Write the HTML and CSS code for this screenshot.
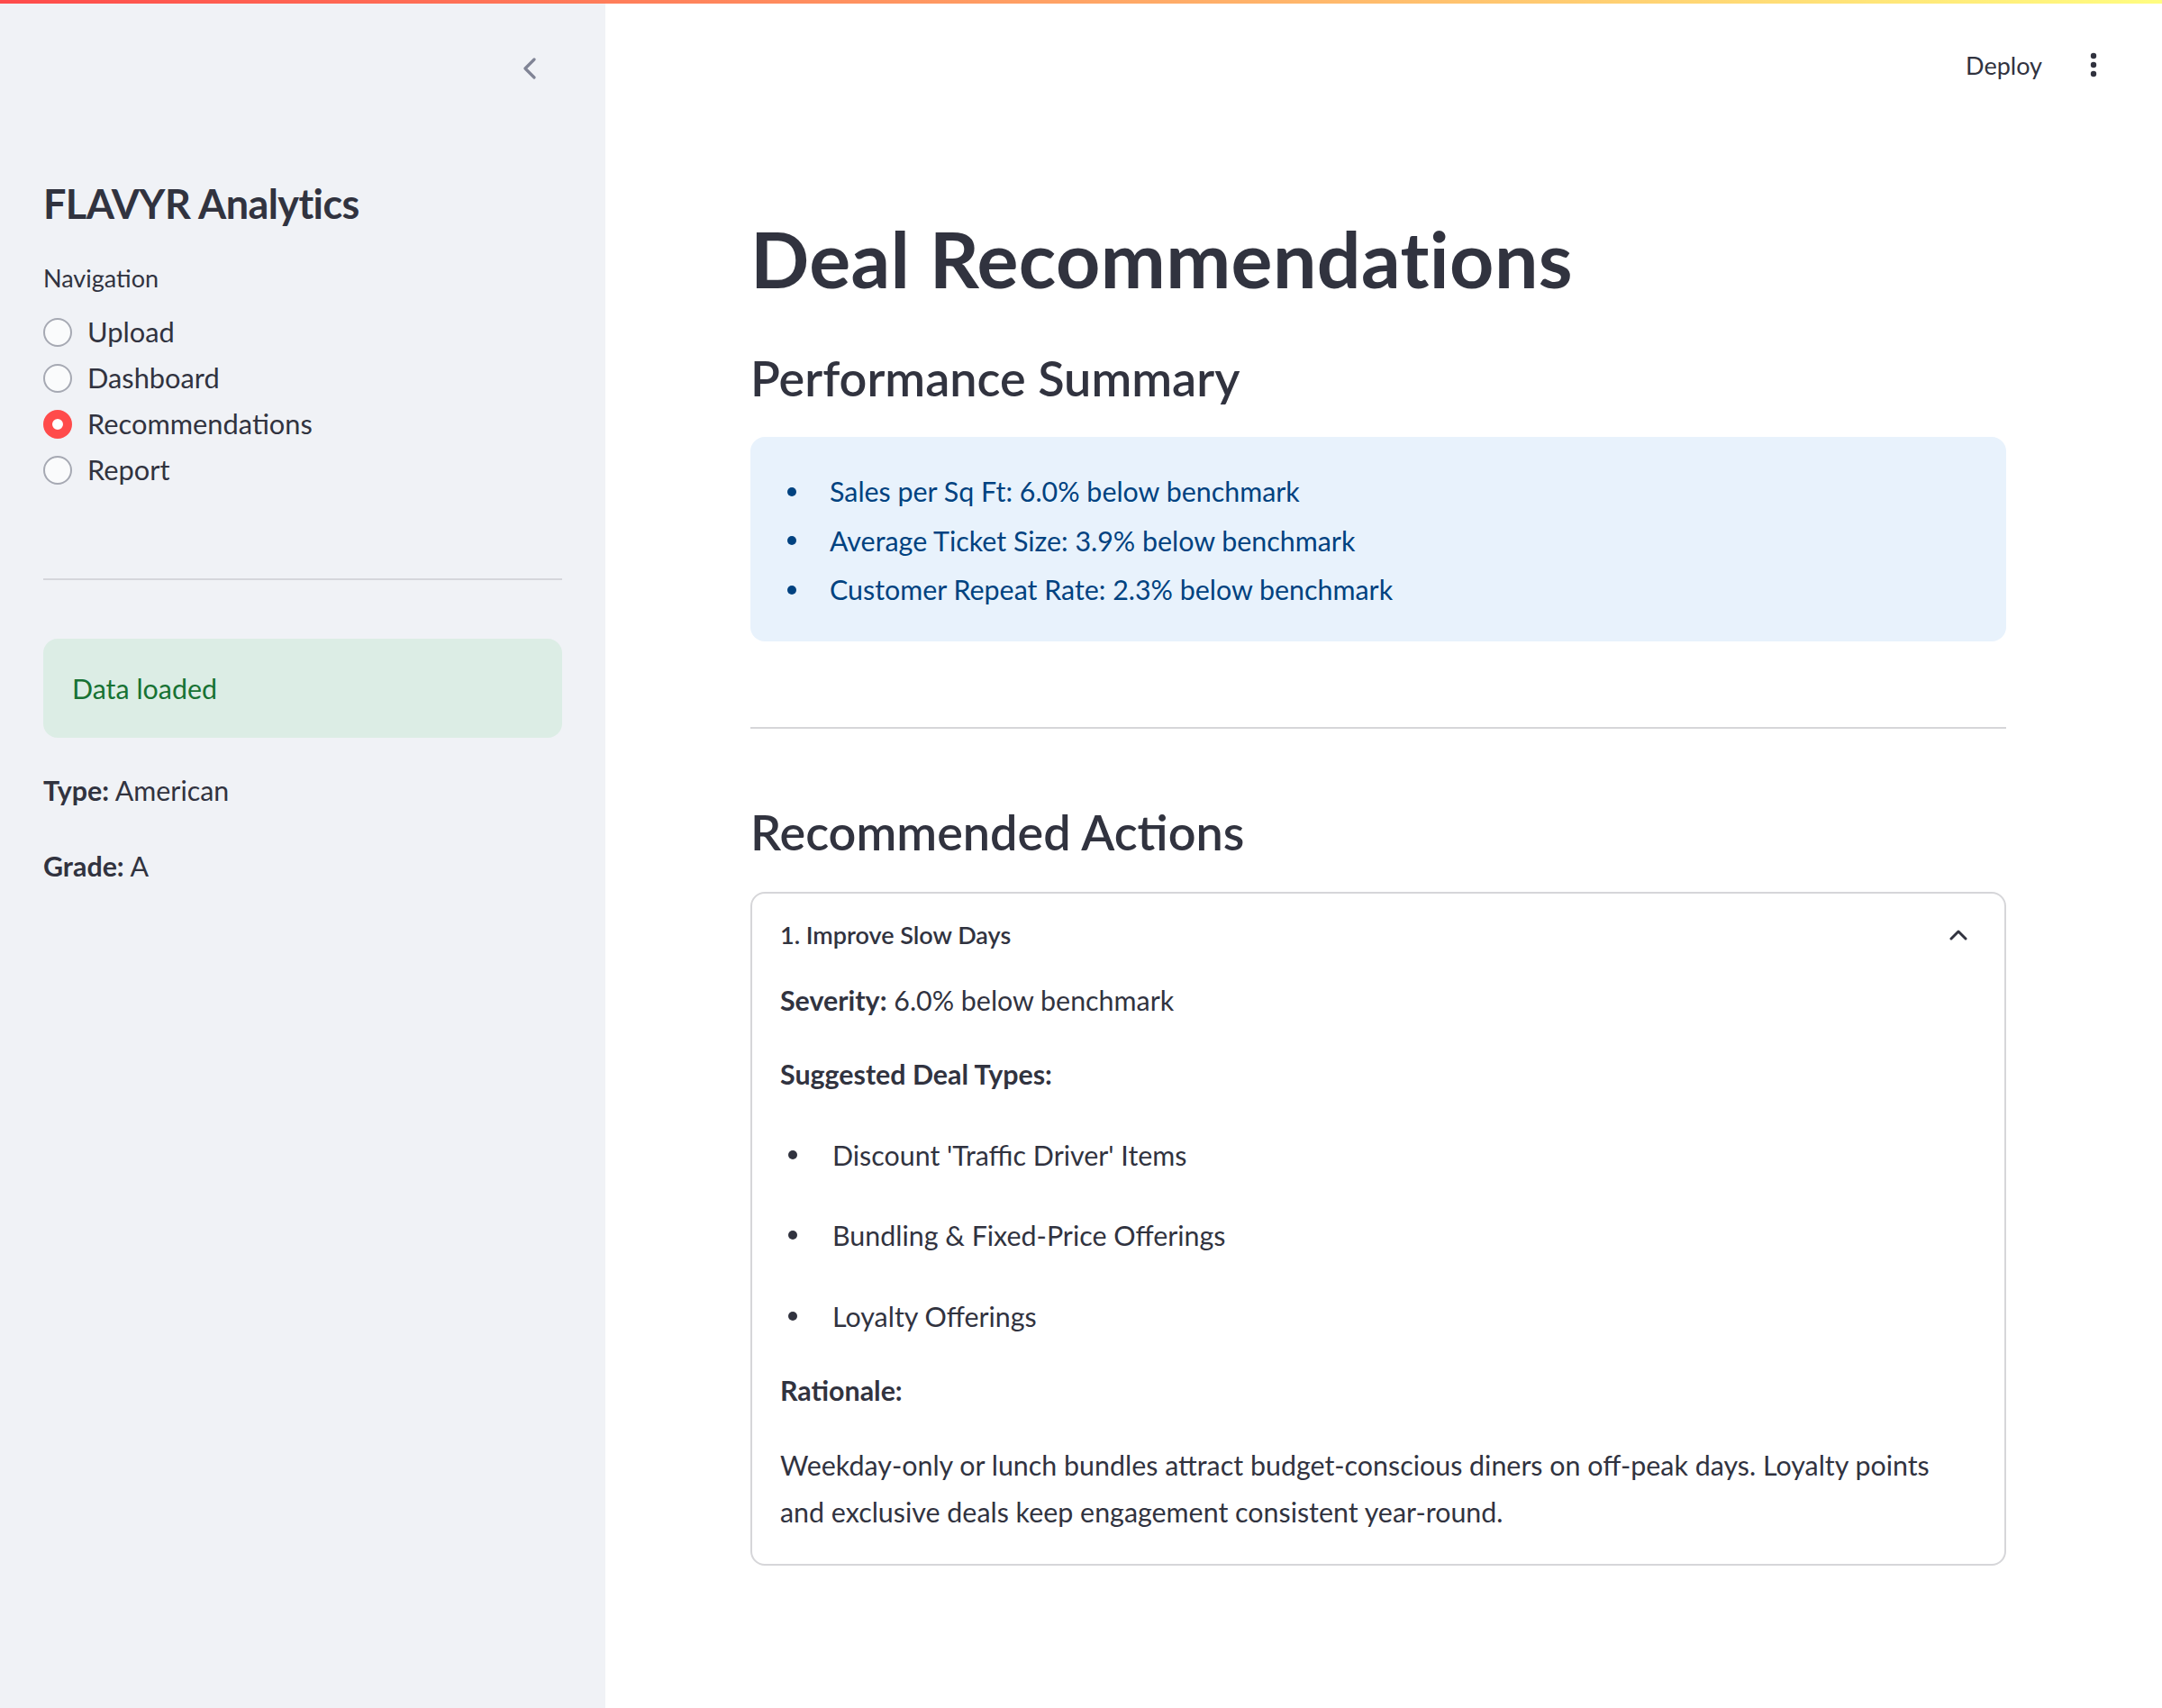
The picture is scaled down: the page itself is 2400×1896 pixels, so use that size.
FILE: index.html
```html
<!DOCTYPE html>
<html lang="en">
<head>
<meta charset="utf-8">
<title>FLAVYR Analytics</title>
<link rel="stylesheet" href="styles.css">
</head>
<body>
<div class="decor"></div>
<div class="app">
  <aside class="sidebar">
    <div class="sb-top">
      <svg class="collapse" width="16" height="24" viewBox="0 0 16 24"><path d="M13 2 L3 12 L13 22" fill="none" stroke="#808495" stroke-width="3.2" stroke-linecap="round" stroke-linejoin="round"/></svg>
    </div>
    <div class="sb-content">
      <h1 class="sb-title">FLAVYR Analytics</h1>
      <div class="nav-label">Navigation</div>
      <div class="radios">
        <div class="radio"><span class="circle"></span><span>Upload</span></div>
        <div class="radio"><span class="circle"></span><span>Dashboard</span></div>
        <div class="radio"><span class="circle checked"></span><span>Recommendations</span></div>
        <div class="radio"><span class="circle"></span><span>Report</span></div>
      </div>
      <hr class="sb-hr">
      <div class="alert-success">Data loaded</div>
      <p class="meta"><strong>Type:</strong> American</p>
      <p class="meta"><strong>Grade:</strong> A</p>
    </div>
  </aside>
  <main class="main">
    <header class="topbar">
      <span class="deploy">Deploy</span>
      <svg class="kebab" width="8" height="28" viewBox="0 0 8 28"><circle cx="4" cy="4" r="3.2" fill="#31333f"/><circle cx="4" cy="14" r="3.2" fill="#31333f"/><circle cx="4" cy="24" r="3.2" fill="#31333f"/></svg>
    </header>
    <div class="block">
      <h1 class="page-title">Deal Recommendations</h1>
      <h3 class="subheader">Performance Summary</h3>
      <div class="alert-info">
        <ul class="bullets info-list">
          <li>Sales per Sq Ft: 6.0% below benchmark</li>
          <li>Average Ticket Size: 3.9% below benchmark</li>
          <li>Customer Repeat Rate: 2.3% below benchmark</li>
        </ul>
      </div>
      <hr class="main-hr">
      <h3 class="subheader sub2">Recommended Actions</h3>
      <div class="expander">
        <div class="exp-summary">
          <span>1. Improve Slow Days</span>
          <svg class="exp-chev" width="20" height="12" viewBox="0 0 20 12"><path d="M2 10 L10 2 L18 10" fill="none" stroke="#31333f" stroke-width="3" stroke-linecap="round" stroke-linejoin="round"/></svg>
        </div>
        <div class="exp-body">
          <p><strong>Severity:</strong> 6.0% below benchmark</p>
          <p class="gap"><strong>Suggested Deal Types:</strong></p>
          <ul class="bullets deal-list">
            <li>Discount 'Traffic Driver' Items</li>
            <li>Bundling &amp; Fixed-Price Offerings</li>
            <li>Loyalty Offerings</li>
          </ul>
          <p class="gap gap-r"><strong>Rationale:</strong></p>
          <p class="gap2">Weekday-only or lunch bundles attract budget-conscious diners on off-peak days. Loyalty points<br>and exclusive deals keep engagement consistent year-round.</p>
        </div>
      </div>
    </div>
  </main>
</div>
</body>
</html>
```
FILE: styles.css
```css
* { box-sizing: border-box; }
html, body { margin: 0; padding: 0; }
body {
  font-family: Lato, "Source Sans Pro", "Liberation Sans", sans-serif;
  color: #31333f;
  font-size: 30.4px;
  background: #ffffff;
}
.decor {
  position: absolute;
  top: 0; left: 0; right: 0;
  height: 4px;
  background: linear-gradient(90deg, #ff4b4b, #fffd80);
  z-index: 5;
}
.app { display: flex; min-height: 1896px; }

/* Sidebar */
.sidebar { width: 672px; flex: none; background: #f0f2f6; }
.sb-top { height: 152px; display: flex; align-items: center; justify-content: flex-end; padding-right: 76px; }
.sb-content { padding: 0 48px; }
.sb-title { margin: 44px 0 0; font-size: 45px; letter-spacing: -0.6px; line-height: 60px; font-weight: 700; }
.nav-label { margin-top: 33px; font-size: 27px; line-height: 40px; }
.radios { margin-top: 14px; display: flex; flex-direction: column; }
.radio { height: 51px; display: flex; align-items: center; gap: 17px; font-size: 30.8px; }
.circle { width: 32px; height: 32px; border-radius: 50%; border: 2px solid #a6a9b3; background: #fafbfc; flex: none; }
.circle.checked { border: 10px solid #ff4b4b; background: #ffffff; }
.sb-hr { margin: 95px 0 0; border: 0; height: 2px; background: #d5d6db; }
.alert-success {
  margin-top: 65px; height: 110px; border-radius: 16px; padding: 0 32px;
  display: flex; align-items: center; background: #dcede5; color: #177233;
}
.meta { margin: 32px 0 0; line-height: 52px; }
strong { font-weight: 700; }

/* Main */
.main { flex: 1; min-width: 0; }
.topbar { height: 144px; display: flex; justify-content: flex-end; align-items: center; padding-right: 72px; gap: 53px; }
.deploy { font-size: 27px; }
.block { margin-left: 161px; width: 1394px; }
.page-title { margin: 88px 0 0; font-size: 86px; letter-spacing: 0.4px; line-height: 110px; font-weight: 700; }
.subheader { margin: 42px 0 0; font-size: 54px; line-height: 72px; font-weight: 600; }
.sub2 { margin-top: 79px; }
.alert-info { margin-top: 29px; padding: 35px 32px 32px; border-radius: 16px; background: #e8f2fc; color: #004280; }
.bullets { list-style: none; margin: 0; padding: 0 0 0 9px; }
.bullets li { display: flex; align-items: center; }
.bullets li::before { content: ""; width: 10px; height: 10px; border-radius: 50%; background: currentColor; flex: none; margin-right: 37px; }
.info-list li { line-height: 51px; }
.info-list li + li { margin-top: 3.5px; }
.main-hr { margin: 95px 0 0; border: 0; height: 2px; background: #d6d6d9; }
.expander { margin-top: 30px; border: 2px solid #d6d6d9; border-radius: 16px; }
.exp-summary { padding: 26px 31px; line-height: 40px; display: flex; justify-content: space-between; align-items: center; font-size: 27px; font-weight: 600; }
.exp-chev { margin-right: 10px; }
.exp-body { padding: 0 31px 32px; }
.exp-body p { margin: 0; line-height: 52px; }
.exp-body p.gap { margin-top: 30px; }
.exp-body p.gap-r { margin-top: 30px; }
.exp-body p.gap2 { margin-top: 31px; }
.deal-list { margin-top: 37.5px; }
.deal-list li { line-height: 52px; }
.deal-list li::before { margin-right: 39px; }
.deal-list li + li { margin-top: 37.5px; }
```
